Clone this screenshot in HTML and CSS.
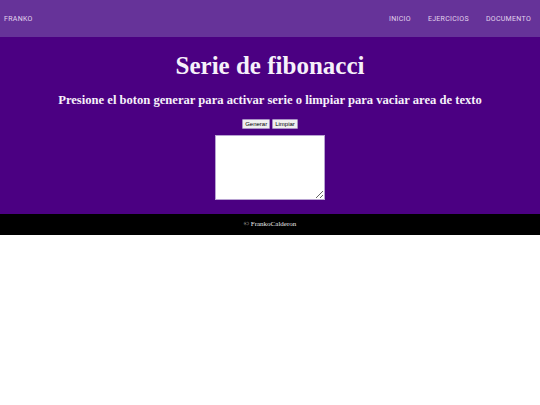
FILE: index.html
```html
<!DOCTYPE html>
<html lang="es">
<head>
<meta charset="utf-8">
<title>Fibonacci</title>
<link rel="stylesheet" href="styles.css">
</head>
<body>
<header class="navbar">
  <a class="brand" href="#">FRANKO</a>
  <nav class="links">
    <a href="#">INICIO</a>
    <a href="#">EJERCICIOS</a>
    <a href="#">DOCUMENTO</a>
  </nav>
</header>
<main class="content">
  <h1 class="title">Serie de fibonacci</h1>
  <h2 class="subtitle">Presione el boton generar para activar serie o limpiar para vaciar area de texto</h2>
  <div class="actions">
    <button class="btn">Generar</button>
    <button class="btn">Limpiar</button>
  </div>
  <textarea class="output"></textarea>
</main>
<footer class="footer">© FrankoCalderon</footer>
</body>
</html>
```
FILE: styles.css
```css
html, body {
  margin: 0;
  padding: 0;
  background: #ffffff;
}
body {
  font-family: "Liberation Serif", "Times New Roman", serif;
}
.navbar {
  height: 37px;
  background: #663399;
  display: flex;
  align-items: center;
  justify-content: space-between;
  padding: 0 9px 0 4px;
  font-family: Roboto, "Liberation Sans", sans-serif;
  font-size: 7px;
  letter-spacing: 0.3px;
}
.navbar a {
  color: #e2d4ee;
  text-decoration: none;
}
.links {
  display: flex;
  gap: 17px;
}
.content {
  background: #4b0082;
  color: #f6f0fa;
  text-align: center;
  padding: 14px 0 14px;
  display: flex;
  flex-direction: column;
  align-items: center;
}
.title {
  margin: 0;
  font-size: 25px;
  line-height: 30px;
  font-weight: bold;
}
.subtitle {
  margin: 10px 0 0;
  font-size: 12.6px;
  line-height: 18px;
  font-weight: bold;
}
.actions {
  margin-top: 10px;
  display: flex;
  gap: 2px;
}
.btn {
  font-family: "Liberation Sans", Arial, sans-serif;
  font-size: 6px;
  padding: 1px 2px;
  height: 10px;
  line-height: 6px;
  background: #efefef;
  border: 1px solid #a890c4;
  border-radius: 1px;
  color: #000;
}
.output {
  margin-top: 6px;
  width: 106px;
  height: 61px;
  padding: 1px;
  border: 1px solid #b8a2d2;
  resize: vertical;
  background: #fff;
  box-sizing: content-box;
}
.footer {
  background: #000000;
  color: #e8e8e8;
  text-align: center;
  height: 21px;
  line-height: 21px;
  font-size: 7px;
}
```
